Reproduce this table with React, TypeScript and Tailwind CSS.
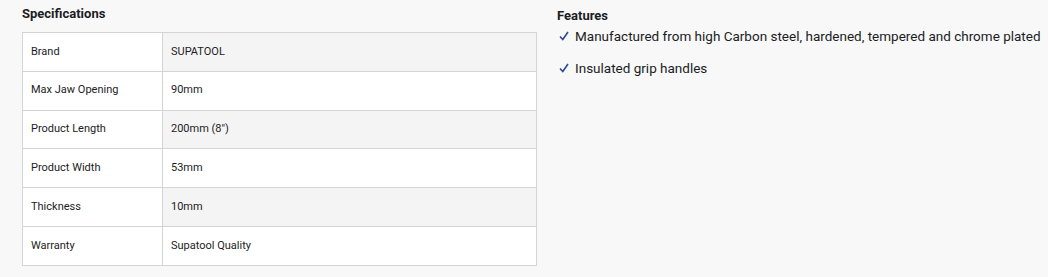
import React from 'react';

const specs: [string, string][] = [
  ['Brand', 'SUPATOOL'],
  ['Max Jaw Opening', '90mm'],
  ['Product Length', '200mm (8")'],
  ['Product Width', '53mm'],
  ['Thickness', '10mm'],
  ['Warranty', 'Supatool Quality'],
];

const features = [
  'Manufactured from high Carbon steel, hardened, tempered and chrome plated',
  'Insulated grip handles',
];

export default function App() {
  return (
    <div className="w-[1048px] h-[277px] bg-[#f8f8f8] text-[#1c1c24] font-['Roboto',sans-serif] flex px-[22px] pt-[5px] gap-[20px]">
      <div className="w-[515px] shrink-0">
        <h2 className="text-[13px] font-bold leading-[17px] mb-[10px]">Specifications</h2>
        <table className="w-[515px] border-collapse border border-[#d4d4d4] text-[11px]">
          <tbody>
            {specs.map(([label, value], i) => (
              <tr key={label} className="h-[38.8px]">
                <td className="w-[140px] bg-white border border-[#d4d4d4] pl-[8px]">{label}</td>
                <td
                  className={`border border-[#d4d4d4] pl-[8px] ${i % 2 === 0 ? 'bg-[#f4f4f4]' : 'bg-white'}`}
                >
                  {value}
                </td>
              </tr>
            ))}
          </tbody>
        </table>
      </div>
      <div className="pt-[2px] whitespace-nowrap">
        <h2 className="text-[13px] font-bold leading-[17px]">Features</h2>
        <ul className="flex flex-col gap-[14px] mt-[3px]">
          {features.map((f) => (
            <li key={f} className="flex items-center text-[13.5px] leading-[18px]">
              <svg width="10" height="10" viewBox="0 0 10 10" className="ml-[2px] mr-[6px]">
                <path d="M1 5.5 L3.8 8.5 L9 1" fill="none" stroke="#2a4a93" strokeWidth="1.6" />
              </svg>
              {f}
            </li>
          ))}
        </ul>
      </div>
    </div>
  );
}
